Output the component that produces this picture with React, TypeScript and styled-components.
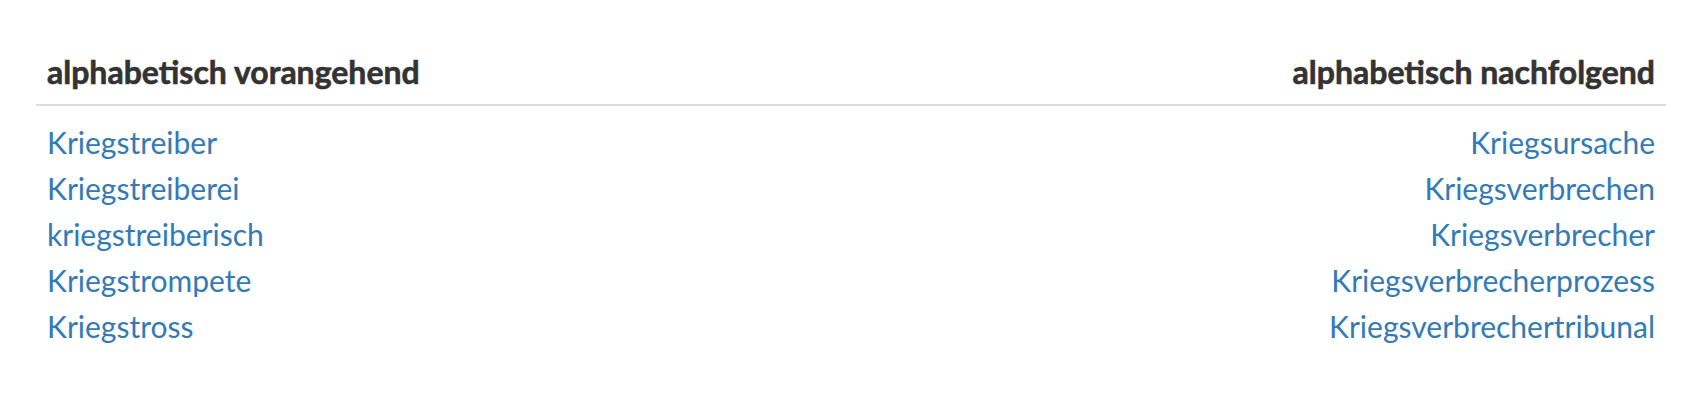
import React from "react";
import styled, { createGlobalStyle } from "styled-components";

const GlobalStyle = createGlobalStyle`
  html, body {
    margin: 0;
    padding: 0;
    background: #fff;
  }
  body {
    font-family: Lato, "Noto Sans", sans-serif;
    color: #333;
  }
`;

const Wrapper = styled.section`
  padding: 52px 32px 0 36px;
`;

const HeadRow = styled.div`
  display: flex;
  justify-content: space-between;
  padding: 0 11px 12px 11px;
  border-bottom: 2px solid #ddd;
`;

const HeadTitle = styled.h3`
  margin: 0;
  font-size: 32px;
  font-weight: 700;
  line-height: 40px;
  color: #333;
  -webkit-text-stroke: 0.6px #333;
`;

const Columns = styled.div`
  display: flex;
  justify-content: space-between;
  padding: 13px 11px 0 11px;
`;

const Column = styled.ul<{ $align: "left" | "right" }>`
  list-style: none;
  margin: 0;
  padding: 0;
  display: flex;
  flex-direction: column;
  align-items: ${(p) => (p.$align === "left" ? "flex-start" : "flex-end")};
`;

const Entry = styled.li`
  font-size: 30px;
  line-height: 46px;
`;

const EntryLink = styled.a`
  color: #337ab7;
  text-decoration: none;
`;

const before = [
  "Kriegstreiber",
  "Kriegstreiberei",
  "kriegstreiberisch",
  "Kriegstrompete",
  "Kriegstross",
];

const after = [
  "Kriegsursache",
  "Kriegsverbrechen",
  "Kriegsverbrecher",
  "Kriegsverbrecherprozess",
  "Kriegsverbrechertribunal",
];

function App() {
  return (
    <>
      <GlobalStyle />
      <Wrapper>
        <HeadRow>
          <HeadTitle>alphabetisch vorangehend</HeadTitle>
          <HeadTitle>alphabetisch nachfolgend</HeadTitle>
        </HeadRow>
        <Columns>
          <Column $align="left">
            {before.map((w) => (
              <Entry key={w}>
                <EntryLink href="#">{w}</EntryLink>
              </Entry>
            ))}
          </Column>
          <Column $align="right">
            {after.map((w) => (
              <Entry key={w}>
                <EntryLink href="#">{w}</EntryLink>
              </Entry>
            ))}
          </Column>
        </Columns>
      </Wrapper>
    </>
  );
}

export default App;
